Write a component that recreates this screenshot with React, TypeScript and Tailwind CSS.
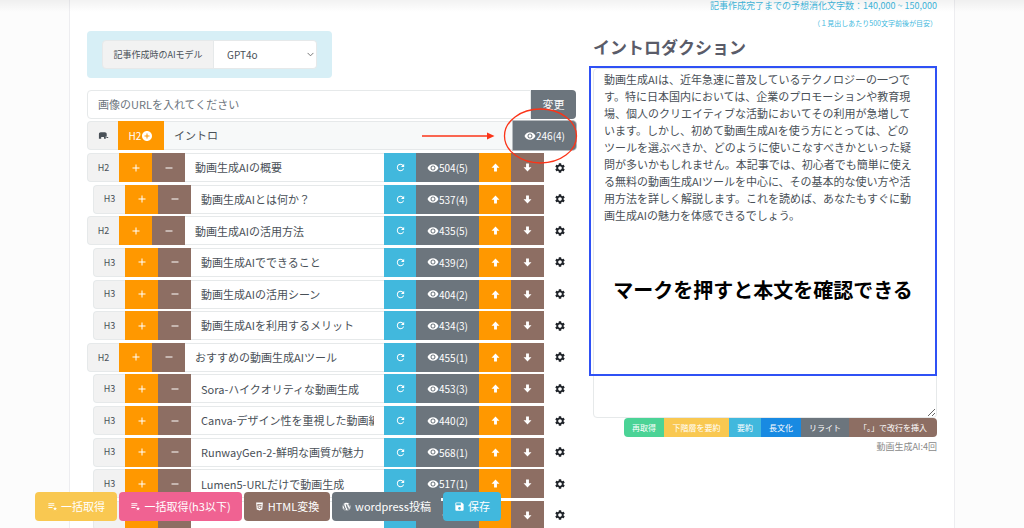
import React from 'react';
import { MdRefresh, MdRemoveRedEye, MdSettings, MdSave, MdAddCircle, MdAdd, MdRemove } from 'react-icons/md';
import { FaHtml5, FaWordpress } from 'react-icons/fa';

type Row = { level: 'H2' | 'H3'; title: string; count: string };

const rows: Row[] = [
  { level: 'H2', title: '動画生成AIの概要', count: '504(5)' },
  { level: 'H3', title: '動画生成AIとは何か？', count: '537(4)' },
  { level: 'H2', title: '動画生成AIの活用方法', count: '435(5)' },
  { level: 'H3', title: '動画生成AIでできること', count: '439(2)' },
  { level: 'H3', title: '動画生成AIの活用シーン', count: '404(2)' },
  { level: 'H3', title: '動画生成AIを利用するメリット', count: '434(3)' },
  { level: 'H2', title: 'おすすめの動画生成AIツール', count: '455(1)' },
  { level: 'H3', title: 'Sora-ハイクオリティな動画生成', count: '453(3)' },
  { level: 'H3', title: 'Canva-デザイン性を重視した動画編集', count: '440(2)' },
  { level: 'H3', title: 'RunwayGen-2-鮮明な画質が魅力', count: '568(1)' },
  { level: 'H3', title: 'Lumen5-URLだけで動画生成', count: '517(1)' },
  { level: 'H3', title: '', count: '' },
];

const introText =
  '動画生成AIは、近年急速に普及しているテクノロジーの一つです。特に日本国内においては、企業のプロモーションや教育現場、個人のクリエイティブな活動においてその利用が急増しています。しかし、初めて動画生成AIを使う方にとっては、どのツールを選ぶべきか、どのように使いこなすべきかといった疑問が多いかもしれません。本記事では、初心者でも簡単に使える無料の動画生成AIツールを中心に、その基本的な使い方や活用方法を詳しく解説します。これを読めば、あなたもすぐに動画生成AIの魅力を体感できるでしょう。';

function Arrow({ down = false }: { down?: boolean }) {
  return (
    <svg viewBox="0 0 10 10" className={down ? 'size-[9px] rotate-180' : 'size-[9px]'} fill="currentColor" aria-hidden="true">
      <path d="M5 .5 9.400 5.200H6.600v4.300H3.400V5.200H.6z" />
    </svg>
  );
}

function ElephantIcon() {
  return (
    <svg viewBox="0 0 24 24" className="size-[11px]" fill="currentColor" aria-hidden="true">
      <path d="M19.5 15.5c-.28 0-.5-.22-.5-.5V9c0-2.2-1.8-4-4-4H6C3.800 5 2 6.800 2 9v10h5v-4h6v4h4v-6h1v2c0 1.400 1 2.500 2.200 2.500 1.500 0 2.300-1.100 2.300-2.500h-1.500c0 .3-.4.500-.700.500z" />
    </svg>
  );
}

function PlaylistStarIcon() {
  return (
    <svg viewBox="0 0 24 24" className="size-[11px]" fill="currentColor" aria-hidden="true">
      <path d="M3 5h13v2H3zm0 4h13v2H3zm0 4h9v2H3zm14.500-1 1.100 3.200H22l-2.700 2 1 3.300-2.800-2-2.800 2 1-3.300-2.700-2h3.400z" />
    </svg>
  );
}

function OutlineRow({ row }: { row: Row }) {
  return (
    <li className={row.level === 'H3' ? 'flex h-[29px] pl-[6px]' : 'flex h-[29px]'}>
      <span className="flex w-8 shrink-0 items-center justify-center rounded-l-sm border border-r-0 border-[#e6e9ea] bg-[#f2f2f2] text-[9px]">
        {row.title && row.level}
      </span>
      <button aria-label="見出しを追加" className="flex w-[33px] shrink-0 items-center justify-center bg-[#ff9800] text-white">
        <MdAdd className="size-3" />
      </button>
      <button aria-label="見出しを削除" className="flex w-[33px] shrink-0 items-center justify-center bg-[#8d6e63] text-white">
        <MdRemove className="size-3" />
      </button>
      <input
        aria-label="見出し"
        defaultValue={row.title}
        className="min-w-0 flex-1 border-y border-[#e6e9ea] bg-white px-[10px] text-[11px] outline-none"
      />
      <button aria-label="再取得" className="flex w-8 shrink-0 items-center justify-center bg-[#41b8dd] text-white">
        <MdRefresh className="size-[11px]" />
      </button>
      <button aria-label="本文を表示" className="flex w-[63px] shrink-0 items-center justify-center bg-[#6c757d] text-[10px] text-white">
        <MdRemoveRedEye className="size-3" />
        {row.count}
      </button>
      <button aria-label="上へ" className="flex w-8 shrink-0 items-center justify-center bg-[#ff9800] text-white">
        <Arrow />
      </button>
      <button aria-label="下へ" className="flex w-[33px] shrink-0 items-center justify-center bg-[#8d6e63] text-white">
        <Arrow down />
      </button>
      <button aria-label="設定" className="flex w-8 shrink-0 items-center justify-center text-[#1f2329]">
        <MdSettings className="size-3" />
      </button>
    </li>
  );
}

export default function App() {
  return (
    <div className="relative h-screen overflow-hidden bg-[#fcfcfc] font-['Noto_Sans_CJK_JP',sans-serif] text-[#495057]">
      <div className="pointer-events-none absolute inset-x-0 top-0 z-10 h-3 bg-linear-to-b from-black/5 to-transparent" />
      <main className="mx-[69px] flex min-h-screen gap-[17px] border-x border-[#ededf0] bg-white px-[17px]">
        <section className="min-w-0 flex-1 pt-[31px]">
          <div className="flex w-[245px] rounded-sm bg-[#d7eff6] px-[15px] py-[9px]">
            <label htmlFor="model" className="flex h-[29px] w-28 items-center justify-center rounded-l-sm border border-[#e6e9ea] bg-[#f2f2f2] text-[9px]">
              記事作成時のAIモデル
            </label>
            <div className="relative flex-1">
              <select id="model" className="h-[29px] w-full appearance-none rounded-r-sm border border-l-0 border-[#e6e9ea] bg-white pl-[13px] text-[10px] outline-none">
                <option>GPT4o</option>
              </select>
              <svg viewBox="0 0 8 5" className="pointer-events-none absolute top-3 right-[3px] h-[5px] w-[7px]" fill="none" stroke="#666" aria-hidden="true">
                <path d="m.7.700 3.300 3.300L7.300.700" />
              </svg>
            </div>
          </div>

          <div className="mt-3 flex h-[29px]">
            <input
              aria-label="画像のURL"
              placeholder="画像のURLを入れてください"
              className="min-w-0 flex-1 rounded-l-sm border border-[#e6e9ea] px-[10px] text-[11px] outline-none placeholder:text-[#6c757d]"
            />
            <button className="w-[45px] rounded-r-sm bg-[#6c757d] text-[11px] text-white">変更</button>
          </div>

          <div className="relative mt-[2px] flex h-[29px]">
            <span className="flex w-[31px] items-center justify-center rounded-l-sm border border-r-0 border-[#e6e9ea] bg-[#f2f2f2]">
              <ElephantIcon />
            </span>
            <button className="flex w-[46px] items-center justify-center bg-[#ff9800] text-[10px] text-white">
              H2
              <MdAddCircle className="size-3" />
            </button>
            <input
              aria-label="イントロ見出し"
              readOnly
              defaultValue="イントロ"
              className="min-w-0 flex-1 border-y border-[#e6e9ea] bg-[#f7f9f9] px-[10px] text-[11px] outline-none"
            />
            <button className="flex w-[63px] items-center justify-center rounded-r-sm bg-[#6c757d] text-[10px] text-white ring-1 ring-[#b5babe]">
              <MdRemoveRedEye className="size-3" />
              246(4)
            </button>
            <svg viewBox="0 0 160 60" className="pointer-events-none absolute -top-4 -right-1 h-[60px] w-40" fill="none" stroke="#fb3418" aria-hidden="true">
              <path d="M2 31h66" strokeWidth="1.500" />
              <path d="m67 27.500 7.500 3.500-7.500 3.500z" fill="#fb3418" stroke="none" />
              <ellipse cx="120.500" cy="31" rx="36" ry="27" strokeWidth="1.300" />
            </svg>
          </div>

          <ul className="mt-[3px] flex min-h-[377px] flex-col justify-between">
            {rows.map((row, index) => (
              <OutlineRow key={index} row={row} />
            ))}
          </ul>
        </section>

        <section className="w-[344px] shrink-0">
          <p className="text-right text-[9px] leading-[12px] text-[#41b8dd]">
            記事作成完了までの予想消化文字数：140,000 ~ 150,000
          </p>
          <p className="mt-[5px] text-right text-[7px] leading-[12px] text-[#41b8dd]">（１見出しあたり500文字前後が目安）</p>
          <h2 className="mt-[6px] text-[17px] leading-6 font-bold text-[#5a5c69]">イントロダクション</h2>
          <div className="relative mt-[9px]">
            <textarea
              aria-label="イントロダクション本文"
              defaultValue={introText}
              className="block h-[350px] w-full rounded-sm border border-[#e6e9ea] py-[2px] pr-[22px] pl-[10px] text-[11px] leading-[17px] outline-none"
            />
            <div className="pointer-events-none absolute -top-[2px] right-0 -left-1 flex h-[310px] items-center justify-center border-2 border-[#2f51f5] pt-[138px] text-xl font-bold text-black">
              マークを押すと本文を確認できる
            </div>
          </div>
          <div className="ml-auto flex h-[19px] w-[313px] overflow-hidden rounded-sm text-[8px] text-white">
            <button className="w-10 bg-[#4bd396]">再取得</button>
            <button className="w-[65px] bg-[#f9c851]">下階層を要約</button>
            <button className="w-8 bg-[#41b8dd]">要約</button>
            <button className="w-10 bg-[#188ae2]">長文化</button>
            <button className="w-12 bg-[#6c757d]">リライト</button>
            <button className="flex-1 bg-[#8d6e63]">「。」で改行を挿入</button>
          </div>
          <p className="mt-[3px] text-right text-[9px] leading-[13px] text-[#8a8a8a]">動画生成AI:4回</p>
        </section>
      </main>

      <div className="absolute bottom-[7px] left-[35px] z-20 flex h-[29px] gap-[2px] text-[11px] text-white">
        <button className="flex w-[82px] items-center justify-center gap-[3px] rounded-sm bg-[#f9c851]">
          <PlaylistStarIcon />
          一括取得
        </button>
        <button className="flex w-[123px] items-center justify-center gap-[3px] rounded-sm bg-[#f06292]">
          <PlaylistStarIcon />
          一括取得(h3以下)
        </button>
        <button className="flex w-[86px] items-center justify-center gap-1 rounded-sm bg-[#8d6e63]">
          <FaHtml5 className="size-[9px]" />
          HTML変換
        </button>
        <button className="flex w-[109px] items-center justify-center gap-1 rounded-sm bg-[#6c757d]">
          <FaWordpress className="size-[9px]" />
          wordpress投稿
        </button>
        <button className="flex w-[58px] items-center justify-center gap-[3px] rounded-sm bg-[#41b8dd]">
          <MdSave className="size-[11px]" />
          保存
        </button>
      </div>
    </div>
  );
}
